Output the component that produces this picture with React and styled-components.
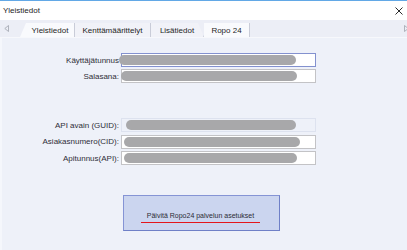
import React from 'react';
import styled, { createGlobalStyle } from 'styled-components';

const GlobalStyle = createGlobalStyle`
  html, body {
    margin: 0;
    padding: 0;
    background: #eef1f9;
  }
  body {
    font-family: "Liberation Sans", Arial, sans-serif;
    font-size: 8px;
    color: #2b2b33;
  }
`;

const Window = styled.div`
  width: 407px;
  height: 250px;
  overflow: hidden;
  display: flex;
  flex-direction: column;
  border-top: 1px solid #62a8e6;
  box-sizing: border-box;
`;

const TitleBar = styled.div`
  height: 19px;
  flex: none;
  background: #ffffff;
  display: flex;
  align-items: center;
  justify-content: space-between;
  padding: 0 4px 0 3px;
  color: #1c1c1c;
`;

const CloseButton = styled.svg`
  width: 8px;
  height: 8px;
  margin-top: 1px;
`;

const TabStrip = styled.div`
  height: 17px;
  flex: none;
  background: #eceef6;
  display: flex;
  align-items: flex-end;
  position: relative;
  border-bottom: 1px solid #f7f8fc;
`;

const ScrollArrow = styled.svg`
  width: 5px;
  height: 7px;
  align-self: center;
  margin: 0 ${p => p.$right ? '0 0 auto' : '11px 0 4px'};
  flex: none;
`;

const Tab = styled.div`
  height: 14px;
  box-sizing: border-box;
  display: flex;
  align-items: center;
  justify-content: center;
  width: ${p => p.$w}px;
  padding-left: ${p => p.$pl || 0}px;
  background: ${p => p.$active ? '#f9fafd' : '#f1f2f8'};
  border-right: 1px solid #c9ccd8;
  color: #1f1f25;
  clip-path: ${p => p.$slant
    ? 'polygon(6px 0, 100% 0, 100% 100%, 0 100%)'
    : p.$slantRight
      ? 'polygon(0 0, calc(100% - 6px) 0, 100% 100%, 0 100%)'
      : 'none'};
`;

const Content = styled.div`
  flex: 1;
  background: #eef1f9;
  border-left: 2px solid #f5f7fc;
  padding-top: 15px;
  display: flex;
  flex-direction: column;
`;

const FieldGroup = styled.div`
  display: grid;
  grid-template-columns: 117px 195px;
  column-gap: 2px;
  row-gap: ${p => p.$gap}px;
  margin-bottom: ${p => p.$after}px;
`;

const Label = styled.div`
  text-align: right;
  align-self: center;
  white-space: nowrap;
  color: #2e2e38;
`;

const FieldWrap = styled.div`
  position: relative;
  height: 14px;
`;

const Field = styled.div`
  height: 100%;
  box-sizing: border-box;
  background: ${p => p.$variant === 'disabled' ? '#eef1f9' : '#ffffff'};
  border: 1px solid ${p =>
    p.$variant === 'focused' ? '#8391cf'
      : p.$variant === 'disabled' ? '#dde2ef'
        : '#c3c3c6'};
`;

const Redaction = styled.div`
  position: absolute;
  top: 2px;
  left: ${p => p.$left}px;
  width: ${p => p.$w}px;
  height: 10px;
  border-radius: 5px;
  background: #a8a8aa;
`;

const UpdateButton = styled.button`
  margin-left: 121px;
  width: 157px;
  height: 36px;
  box-sizing: border-box;
  background: #cbd5ef;
  border: 1px solid #8594d5;
  border-right-color: #6f80c7;
  border-bottom-color: #6f80c7;
  font-family: "Liberation Sans", Arial, sans-serif;
  font-size: 7px;
  color: #2b2b35;
  padding: 0;
  display: flex;
  align-items: center;
  justify-content: center;
`;

const ButtonText = styled.span`
  display: inline-block;
  padding: 3px 6px 3px;
  margin-top: 5px;
  margin-left: -2px;
  border-bottom: 1.5px solid #e4161c;
`;

const fields1 = [
  { label: 'Käyttäjätunnus', variant: 'focused', left: -2, w: 177 },
  { label: 'Salasana:', variant: 'normal', left: 0, w: 176 },
];

const fields2 = [
  { label: 'API avain (GUID):', variant: 'disabled', left: 5, w: 170 },
  { label: 'Asiakasnumero(CID):', variant: 'normal', left: 3, w: 176 },
  { label: 'Apitunnus(API):', variant: 'normal', left: 3, w: 173 },
];

const Row = ({ label, variant, left, w }) => (
  <>
    <Label>{label}</Label>
    <FieldWrap>
      <Field $variant={variant} />
      <Redaction $left={left} $w={w} />
    </FieldWrap>
  </>
);

export default function App() {
  return (
    <>
      <GlobalStyle />
      <Window>
        <TitleBar>
          <span>Yleistiedot</span>
          <CloseButton viewBox="0 0 8 8">
            <path d="M0.5 0.5 L7.5 7.5 M7.5 0.5 L0.5 7.5" stroke="#2a2a2a" strokeWidth="1" />
          </CloseButton>
        </TitleBar>

        <TabStrip>
          <ScrollArrow viewBox="0 0 5 7">
            <path d="M4.5 0.5 L0.8 3.5 L4.5 6.5 Z" fill="none" stroke="#a0a3ad" strokeWidth="0.8" />
          </ScrollArrow>
          <Tab $w={55} $pl={6} $slant $active>Yleistiedot</Tab>
          <Tab $w={76}>Kenttämäärittelyt</Tab>
          <Tab $w={53} $slantRight>Lisätiedot</Tab>
          <Tab $w={46} $active>Ropo 24</Tab>
          <ScrollArrow $right viewBox="0 0 5 7" style={{ marginRight: '-2px' }}>
            <path d="M0.5 0.5 L4.2 3.5 L0.5 6.5 Z" fill="none" stroke="#a0a3ad" strokeWidth="0.8" />
          </ScrollArrow>
        </TabStrip>

        <Content>
          <FieldGroup $gap={2} $after={35}>
            {fields1.map(f => <Row key={f.label} {...f} />)}
          </FieldGroup>
          <FieldGroup $gap={2.5} $after={30}>
            {fields2.map(f => <Row key={f.label} {...f} />)}
          </FieldGroup>
          <UpdateButton>
            <ButtonText>Päivitä Ropo24 palvelun asetukset</ButtonText>
          </UpdateButton>
        </Content>
      </Window>
    </>
  );
}
